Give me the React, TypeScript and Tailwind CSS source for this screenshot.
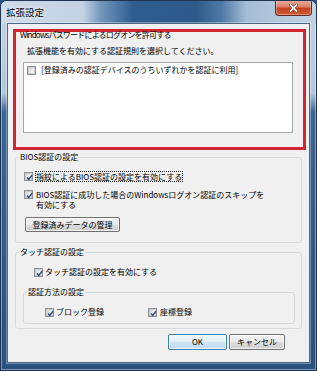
import React from 'react';

const FONT = "font-['Noto_Sans_CJK_JP','Noto_Sans_CJK_SC',sans-serif]";

function CheckBox({ checked }: { checked?: boolean }) {
  return (
    <span className="relative flex h-[9px] w-[9px] shrink-0 items-center justify-center border border-[#8e8f8f] bg-[#f4f4f4]">
      <span className="h-[7px] w-[7px] border border-[#c9ccd1] bg-[linear-gradient(135deg,#d2d5d9_0%,#eef0f2_60%,#fbfbfb_100%)]" />
      {checked && (
        <svg className="absolute inset-0" width="9" height="9" viewBox="0 0 9 9">
          <path d="M2 4.4 L3.8 6.4 L7.1 2.1" fill="none" stroke="#2e4a7c" strokeWidth="1.5" />
        </svg>
      )}
    </span>
  );
}

function WinButton({ label, width, primary }: { label: string; width: string; primary?: boolean }) {
  return (
    <button
      className={
        primary
          ? `h-[16px] ${width} rounded-[2px] border border-[#3c7fb1] bg-[linear-gradient(180deg,#eef6fb_0%,#e0eef8_50%,#cfe4f3_50%,#c3dcef_100%)] text-[8px] leading-none text-black shadow-[inset_0_0_0_1px_rgba(255,255,255,0.8)]`
          : `h-[16px] ${width} rounded-[2px] border border-[#707070] bg-[linear-gradient(180deg,#f2f2f2_0%,#ebebeb_50%,#dddddd_50%,#cfcfcf_100%)] text-[8px] leading-none text-black shadow-[inset_0_0_0_1px_rgba(255,255,255,0.7)]`
      }
    >
      {label}
    </button>
  );
}

export default function App() {
  return (
    <div className={`${FONT} h-[371px] w-[317px] bg-[#2b5685] text-[8px] text-black`}>
      <div className="flex h-[371px] w-[317px] flex-col overflow-hidden rounded-t-[7px] border border-[#1f3450] bg-[linear-gradient(180deg,#c4d4e5_0%,#b3c7dc_25%,#3a6694_30%,#27517f_100%)] shadow-[inset_0_0_0_1px_rgba(255,255,255,0.4)]">
        {/* title bar */}
        <div className="flex h-[22px] shrink-0 items-start justify-between bg-[linear-gradient(90deg,#cddbe9_0%,#c3d3e4_26%,#7094ba_32%,#2f5d8e_42%,#2d5a8a_62%,#4f79a5_70%,#a6bed6_78%,#c3d3e3_100%)] pl-[5px] pr-[4px]">
          <span className="pt-[6px] text-[9.5px] leading-[11px] text-black [text-shadow:0_0_4px_#fff,0_0_2px_#fff]">
            拡張設定
          </span>
          <div className="-mt-[1px] flex h-[16px] w-[37px] items-center justify-center rounded-b-[4px] border border-t-0 border-[#5e2b22] bg-[linear-gradient(180deg,#eab1a2_0%,#db7f66_45%,#c4431f_55%,#cf5a32_100%)] shadow-[inset_0_0_0_1px_rgba(255,255,255,0.35)]">
            <svg width="9" height="8" viewBox="0 0 9 8">
              <path d="M1.5 1 L7.5 7 M7.5 1 L1.5 7" stroke="#4a1a10" strokeWidth="3" strokeLinecap="square" />
              <path d="M1.5 1 L7.5 7 M7.5 1 L1.5 7" stroke="#fff" strokeWidth="1.8" strokeLinecap="square" />
            </svg>
          </div>
        </div>

        {/* client area */}
        <div className="ml-[6px] flex h-[340px] w-[303px] flex-col border border-[#4a6888] bg-[#f0f0f0] shadow-[0_0_0_1px_rgba(255,255,255,0.35)]">
          {/* highlighted group */}
          <div className="ml-[5px] mt-[5px] h-[121px] w-[293px] border-[3px] border-[#d0262f]">
            <div className="-mt-[1px] h-[8px] pl-[4px] leading-[8px] tracking-[-0.8px]">
              Windowsパスワードによるログオンを許可する
            </div>
            <div className="mt-[7px] pl-[11px] leading-[10px]">拡張機能を有効にする認証規則を選択してください。</div>
            <div className="ml-[7px] mt-[6px] h-[71px] w-[270px] border border-[#a3a6ab] bg-white">
              <div className="flex items-center gap-[5px] pl-[3px] pt-[2px] leading-[10px]">
                <CheckBox />
                <span>[登録済みの認証デバイスのうちいずれかを認証に利用]</span>
              </div>
            </div>
          </div>

          {/* BIOS */}
          <fieldset className="ml-[7px] mt-[2px] h-[91px] w-[287px] rounded-[3px] border border-[#d5dadf]">
            <legend className="ml-[3px] px-[1px] leading-[10px]">BIOS認証の設定</legend>
            <div className="ml-[8px] mt-[9px] flex items-center gap-[2px]">
              <CheckBox checked />
              <span className="border border-dotted border-[#222] leading-[9px]">指紋によるBIOS認証の設定を有効にする</span>
            </div>
            <div className="ml-[8px] mt-[8px] flex items-start gap-[3px]">
              <CheckBox checked />
              <span className="leading-[10px]">
                BIOS認証に成功した場合のWindowsログオン認証のスキップを
                <br />
                有効にする
              </span>
            </div>
            <div className="ml-[9px] mt-[7px]">
              <button className="h-[15px] w-[95px] rounded-[2px] border border-[#707070] bg-[linear-gradient(180deg,#f2f2f2_0%,#ebebeb_50%,#dddddd_50%,#cfcfcf_100%)] text-[8px] leading-none text-black shadow-[inset_0_0_0_1px_rgba(255,255,255,0.7)]">
                登録済みデータの管理
              </button>
            </div>
          </fieldset>

          {/* touch */}
          <fieldset className="ml-[7px] mt-[4px] h-[82px] w-[287px] rounded-[3px] border border-[#d5dadf]">
            <legend className="ml-[3px] px-[1px] leading-[10px]">タッチ認証の設定</legend>
            <div className="ml-[18px] mt-[10px] flex items-center gap-[2px] leading-[10px]">
              <CheckBox checked />
              <span>タッチ認証の設定を有効にする</span>
            </div>
            <fieldset className="ml-[7px] mt-[10px] h-[37px] w-[272px] rounded-[3px] border border-[#d5dadf]">
              <legend className="ml-[3px] px-[1px] leading-[10px]">認証方法の設定</legend>
              <div className="ml-[21px] mt-[10px] flex items-center leading-[10px]">
                <div className="flex w-[103px] items-center gap-[2px]">
                  <CheckBox checked />
                  <span>ブロック登録</span>
                </div>
                <div className="flex items-center gap-[3px]">
                  <CheckBox checked />
                  <span>座標登録</span>
                </div>
              </div>
            </fieldset>
          </fieldset>

          {/* buttons */}
          <div className="mt-[5px] flex justify-end gap-[2px] pr-[24px]">
            <WinButton label="OK" width="w-[59px]" primary />
            <WinButton label="キャンセル" width="w-[56px]" />
          </div>
        </div>
      </div>
    </div>
  );
}
